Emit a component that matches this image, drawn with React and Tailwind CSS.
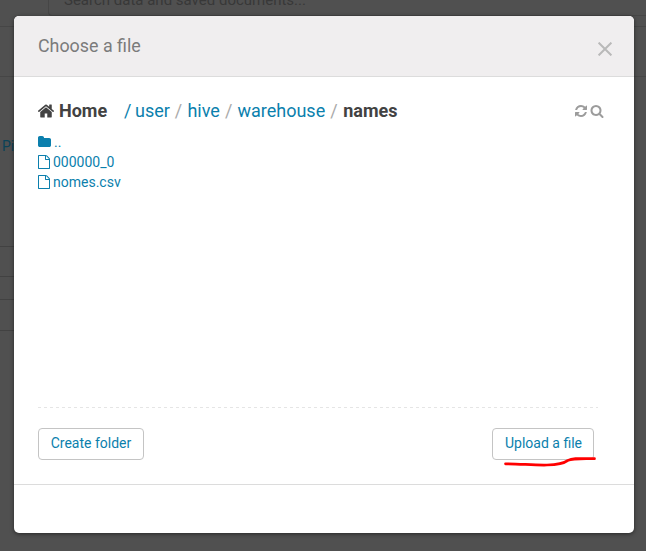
const ICONS = {
  home: 'M1472 992v480q0 26-19 45t-45 19h-384v-384h-256v384h-384q-26 0-45-19t-19-45v-480q0-1 .5-3t.5-3l575-474 575 474q1 2 1 6zm223-69l-62 74q-8 9-21 11h-3q-13 0-21-7l-692-577-692 577q-12 8-24 7-13-2-21-11l-62-74q-8-10-7-23.5t11-21.5l719-599q32-26 76-26t76 26l244 204v-195q0-14 9-23t23-9h192q14 0 23 9t9 23v408l219 182q10 8 11 21.5t-7 23.5z',
  refresh: 'M1639 1056q0 5-1 7-64 268-268 434.5t-478 166.5q-146 0-282.5-55t-243.5-157l-129 129q-19 19-45 19t-45-19-19-45v-448q0-26 19-45t45-19h448q26 0 45 19t19 45-19 45l-137 137q71 66 161 102t187 36q134 0 250-65t186-179q11-17 53-117 8-23 30-23h192q13 0 22.5 9.5t9.5 22.5zm25-800v448q0 26-19 45t-45 19h-448q-26 0-45-19t-19-45 19-45l138-138q-148-137-349-137-134 0-250 65t-186 179q-11 17-53 117-8 23-30 23h-199q-13 0-22.5-9.5t-9.5-22.5v-7q65-268 270-434.5t480-166.5q146 0 284 55.5t245 156.5l130-129q19-19 45-19t45 19 19 45z',
  search: 'M1216 832q0-185-131.5-316.5t-316.5-131.5-316.5 131.5-131.5 316.5 131.5 316.5 316.5 131.5 316.5-131.5 131.5-316.5zm512 832q0 52-38 90t-90 38q-54 0-90-38l-343-342q-179 124-399 124-143 0-273.5-55.5t-225-150-150-225-55.5-273.5 55.5-273.5 150-225 225-150 273.5-55.5 273.5 55.5 225 150 150 225 55.5 273.5q0 220-124 399l343 343q37 37 37 90z',
  folder: 'M1728 608v704q0 92-66 158t-158 66h-1216q-92 0-158-66t-66-158v-960q0-92 66-158t158-66h320q92 0 158 66t66 158v32h672q92 0 158 66t66 158z',
  file: 'M1596 380q28 28 48 76t20 88v1152q0 40-28 68t-68 28h-1344q-40 0-68-28t-28-68v-1600q0-40 28-68t68-28h896q40 0 88 20t76 48zm-444-244v376h376q-10-29-22-41l-313-313q-12-12-41-22zm384 1528v-1024h-416q-40 0-68-28t-28-68v-416h-768v1536h1280z',
};

function Icon({ name, box = '0 0 1792 1792', className }) {
  return (
    <svg viewBox={box} className={`shrink-0 fill-current ${className}`}>
      <path d={ICONS[name]} />
    </svg>
  );
}

function Backdrop() {
  return (
    <div className="flex h-[551px] flex-col bg-[#505050]">
      <div className="flex h-[27px] items-start border-b border-[#464646] pl-12">
        <div className="flex h-4 flex-1 items-end rounded-bl border-b border-l border-[#464646] pl-[15px]">
          <span className="mb-1.5 text-[15px] leading-[17px] text-[#383838]">Search data and saved documents...</span>
        </div>
      </div>
      <div className="h-[50px] border-b border-[#464646]" />
      <div className="mt-[59px] h-5 pl-0.5 text-[14px] leading-5 text-[#0a4258]">Pi</div>
      <div className="mt-[90px] h-[31px] w-3.5 border-y border-[#424242]" />
      <div className="mt-[22px] h-[32px] w-3.5 border-y border-[#424242]" />
    </div>
  );
}

const parents = ['user', 'hive', 'warehouse'];
const files = ['000000_0', 'nomes.csv'];

function Breadcrumb() {
  return (
    <div className="flex h-6 items-center text-[18px] leading-6 text-[#0b7fad]">
      <div className="flex w-[86px] items-center font-bold text-[#424242]">
        <Icon name="home" box="96 0 1600 1792" className="mr-[5px] h-[18px] w-4" />
        Home
      </div>
      <span className="w-[11px]">/</span>
      {parents.map((name) => (
        <span key={name} className="flex">
          {name}
          <span className="ml-[5px] mr-[5.15px] text-[#aaa]">/</span>
        </span>
      ))}
      <span className="pl-[0.4px] font-bold text-[#424242]">names</span>
      <div className="ml-auto flex gap-0.5 pr-[0.5px] text-[#9c9c9c]">
        <Icon name="refresh" className="h-3.5 w-3.5" />
        <Icon name="search" className="h-3.5 w-3.5" />
      </div>
    </div>
  );
}

function Button({ children, className }) {
  return (
    <button className={`h-8 rounded-[4px] border border-[#c4c4c4] bg-white pb-0.5 text-[14px] leading-5 text-[#0b7fad] ${className}`}>
      {children}
    </button>
  );
}

export default function App() {
  return (
    <div className="relative h-[551px] w-[646px] overflow-hidden font-['Roboto',sans-serif]">
      <Backdrop />
      <div className="absolute left-3.5 top-4 flex h-[517px] w-[620px] flex-col overflow-hidden rounded-[5px] bg-white shadow-[0_1px_4px_rgba(0,0,0,0.5)]">
        <div className="flex h-[61px] shrink-0 items-center justify-between border-b border-[#dcdcdc] bg-[#f0eeef] pl-6 pr-[22px]">
          <h3 className="text-[17.85px] leading-6 text-[#7b7b7b]">Choose a file</h3>
          <svg viewBox="0 0 14 14" className="mt-1.5 h-3.5 w-3.5 fill-none stroke-[#b9b9b9] stroke-2">
            <path d="M.6.6l12.8 12.8M13.4.6L.6 13.4" />
          </svg>
        </div>
        <div className="flex h-[407px] flex-col pl-6 pr-[30px] pt-[22px]">
          <Breadcrumb />
          <ul className="mt-[9px] text-[14px] leading-5 text-[#0b7fad]">
            <li className="flex h-5 items-center">
              <Icon name="folder" box="64 0 1664 1792" className="mr-[3px] h-3.5 w-[13px]" />..
            </li>
            {files.map((name) => (
              <li key={name} className="flex h-5 items-center">
                <Icon name="file" box="128 0 1536 1792" className="mr-[3px] h-3.5 w-3" />
                {name}
              </li>
            ))}
          </ul>
          <div className="mr-[-4px] mt-auto h-px w-[560px] bg-[repeating-linear-gradient(to_right,#e5e5e5_0_3px,transparent_3px_6px)]" />
          <div className="relative mb-6 mt-5 flex justify-between pr-2.5">
            <Button className="w-[106px]">Create folder</Button>
            <Button className="w-[102px] pl-px">Upload a file</Button>
            <svg viewBox="0 0 94 12" className="absolute left-[465px] top-[27px] h-3 w-[94px] fill-none stroke-[#ff0000] stroke-[2.7]">
              <path d="M2.5 8.8C18 8.9 31 10.3 44 10C54 9.8 61 8.4 65 5.4C69 3.2 75 3.5 91.5 3.7" strokeLinecap="round" />
            </svg>
          </div>
        </div>
        <div className="flex-1 border-t border-[#dcdcdc]" />
      </div>
    </div>
  );
}
